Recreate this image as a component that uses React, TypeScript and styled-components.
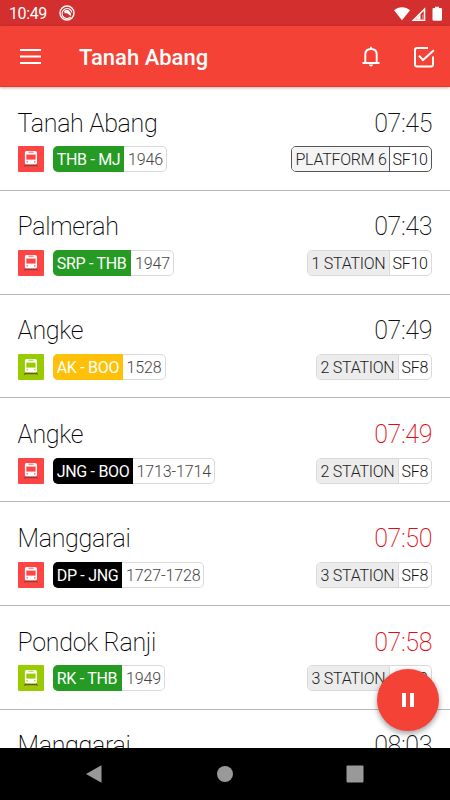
import React from "react";
import styled, { createGlobalStyle } from "styled-components";

const GlobalStyle = createGlobalStyle`
  * { box-sizing: border-box; }
  body { margin: 0; background: #fff; font-family: Roboto, "Liberation Sans", sans-serif; }
`;

const Screen = styled.div`
  position: relative;
  width: 450px;
  height: 800px;
  display: flex;
  flex-direction: column;
  overflow: hidden;
  background: #fff;
`;

const StatusBar = styled.div`
  height: 26px;
  flex: none;
  display: flex;
  align-items: center;
  padding: 1px 7px 0 9px;
  background: #d32f2f;
  color: #fff;
  font-size: 16px;
  line-height: 25px;
  svg { display: block; }
`;

const Clock = styled.span`
  width: 50px;
  letter-spacing: -0.4px;
`;

const StatusIcons = styled.div`
  margin-left: auto;
  display: flex;
`;

const AppBar = styled.header`
  position: relative;
  height: 61px;
  flex: none;
  display: flex;
  align-items: center;
  padding: 0 15px 0 20px;
  background: #f44336;
  border-bottom: 1px solid #f63420;
  box-shadow: 0 1px 3px rgba(0, 0, 0, 0.28);
  color: #fff;
  svg { display: block; }
`;

const Title = styled.h1`
  margin: 4px auto 0 38px;
  font-size: 22px;
  font-weight: 500;
  line-height: 28px;
  white-space: nowrap;
`;

const Actions = styled.div`
  display: flex;
  align-items: center;
  gap: 33px;
  padding-top: 1px;
`;

const List = styled.main`
  flex: 1;
  min-height: 0;
  overflow: hidden;
`;

const Row = styled.section`
  height: 103.8px;
  padding: 20.7px 18px 0 17.5px;
  border-bottom: 1px solid #b8b8b8;
`;

const Line = styled.div`
  display: flex;
  justify-content: space-between;
  height: 32px;
  line-height: 32px;
  font-size: 25px;
  font-weight: 200;
  color: #000;
`;

const Station = styled.span`
  letter-spacing: -0.3px;
`;

const Time = styled.span<{ $late?: boolean }>`
  letter-spacing: -0.4px;
  color: ${(p) => (p.$late ? "#e00b14" : "#111")};
`;

const Tags = styled.div`
  display: flex;
  align-items: center;
  justify-content: space-between;
  margin-top: 6.7px;
`;

const Route = styled.div`
  display: flex;
  align-items: center;
  gap: 9px;
`;

const TrainBox = styled.span<{ $color: string }>`
  width: 26px;
  height: 26px;
  border-radius: 1px;
  background: ${(p) => p.$color};
  svg { display: block; }
`;

const Pill = styled.div<{ $dark?: boolean }>`
  display: flex;
  height: 26px;
  border: 1px solid ${(p) => (p.$dark ? "#555" : "#d9d9d9")};
  border-radius: 5px;
  overflow: hidden;
  font-size: 16px;
  line-height: 26px;
  white-space: nowrap;
`;

const LinePill = styled(Pill)`
  border: 0;
  box-shadow: inset 0 0 0 1px #d9d9d9;
`;

const LineCode = styled.span<{ $w: number; $color: string }>`
  width: ${(p) => p.$w}px;
  height: 26px;
  padding: 1px 0 0 4.2px;
  background: ${(p) => p.$color};
  color: #fff;
  letter-spacing: -0.3px;
`;

const TrainNo = styled.span<{ $w: number }>`
  width: ${(p) => p.$w}px;
  padding: 1px 0 0 3.9px;
  color: #444;
  font-weight: 300;
  letter-spacing: -0.1px;
`;

const Position = styled.span<{ $dark?: boolean; $w: number }>`
  width: ${(p) => p.$w}px;
  padding-left: 3.5px;
  background: ${(p) => (p.$dark ? "#f4f4f4" : "#ececec")};
  border-right: 1px solid ${(p) => (p.$dark ? "#555" : "#d9d9d9")};
  color: #222;
  font-weight: 300;
  letter-spacing: -0.25px;
`;

const Cars = styled.span<{ $w: number }>`
  width: ${(p) => p.$w}px;
  padding-left: 3px;
  color: #111;
  font-weight: 300;
  letter-spacing: -0.3px;
`;

const PauseButton = styled.button`
  position: absolute;
  left: 377px;
  top: 669px;
  width: 62px;
  height: 62px;
  border: 0;
  border-radius: 50%;
  padding: 0;
  display: flex;
  align-items: center;
  justify-content: center;
  background: #f44336;
  box-shadow: 0 3px 5px rgba(0, 0, 0, 0.28), 0 1px 8px rgba(0, 0, 0, 0.12);
`;

const NavBar = styled.nav`
  height: 52px;
  flex: none;
  background: #000;
  display: flex;
  align-items: center;
  justify-content: space-between;
  padding: 0 86px 0 86px;
  svg { display: block; }
`;

const TrainIcon = ({ color }: { color: string }) => (
  <svg width="26" height="26" viewBox="0 0 26 26">
    <path d="M8 18.8 6.2 20.6M18 18.8l1.6 1.8M7 19.6h12" stroke="#7a4a4a" strokeWidth="1.1" fill="none" />
    <path d="M8.5 5h8.2c1.600 0 2.300.9 2.300 2.300v9.400c0 1-.7 1.600-1.700 1.600H8.600c-1 0-1.700-.6-1.700-1.600V7.300C6.900 5.900 7.300 5 8.500 5z" fill="#fff" />
    <path d="M10.5 6.200h5" stroke={color} strokeWidth=".9" />
    <path d="M8.300 8.600h9.300v5H8.300z" fill={color} />
    <path d="M8.500 15.800h1.500M16 15.800h1.500" stroke={color} strokeWidth="1" />
  </svg>
);

const RED = "#ff4444";
const LIME = "#99cc00";
const GREEN = "#259b24";

type Train = {
  name: string; time: string; late?: boolean; icon: string;
  code: string; color: string; codeW: number; no: string; noW: number;
  pos: string; posW: number; cars: string; carsW: number; dark?: boolean;
};

const trains: Train[] = [
  { name: "Tanah Abang", time: "07:45", icon: RED, code: "THB - MJ", color: GREEN, codeW: 71.5, no: "1946", noW: 43, pos: "PLATFORM 6", posW: 97.5, cars: "SF10", carsW: 41.5, dark: true },
  { name: "Palmerah", time: "07:43", icon: RED, code: "SRP - THB", color: GREEN, codeW: 78.5, no: "1947", noW: 43, pos: "1 STATION", posW: 81.5, cars: "SF10", carsW: 41.5 },
  { name: "Angke", time: "07:49", icon: LIME, code: "AK - BOO", color: "#ffc107", codeW: 70, no: "1528", noW: 43, pos: "2 STATION", posW: 81.5, cars: "SF8", carsW: 32.5 },
  { name: "Angke", time: "07:49", late: true, icon: RED, code: "JNG - BOO", color: "#000", codeW: 80, no: "1713-1714", noW: 82, pos: "2 STATION", posW: 81.5, cars: "SF8", carsW: 32.5 },
  { name: "Manggarai", time: "07:50", late: true, icon: RED, code: "DP - JNG", color: "#000", codeW: 69.5, no: "1727-1728", noW: 82, pos: "3 STATION", posW: 81.5, cars: "SF8", carsW: 32.5 },
  { name: "Pondok Ranji", time: "07:58", late: true, icon: LIME, code: "RK - THB", color: GREEN, codeW: 69.5, no: "1949", noW: 42.5, pos: "3 STATION", posW: 81.5, cars: "SF10", carsW: 41.5 },
];

const TrainSummary = ({ name, time, late }: Pick<Train, "name" | "time" | "late">) => (
  <Line>
    <Station>{name}</Station>
    <Time $late={late}>{time}</Time>
  </Line>
);

const TrainRow = ({ t }: { t: Train }) => (
  <Row>
    <TrainSummary name={t.name} time={t.time} late={t.late} />
    <Tags>
      <Route>
        <TrainBox $color={t.icon}><TrainIcon color={t.icon} /></TrainBox>
        <LinePill>
          <LineCode $color={t.color} $w={t.codeW}>{t.code}</LineCode>
          <TrainNo $w={t.noW}>{t.no}</TrainNo>
        </LinePill>
      </Route>
      <Pill $dark={t.dark}>
        <Position $dark={t.dark} $w={t.posW}>{t.pos}</Position>
        <Cars $w={t.carsW}>{t.cars}</Cars>
      </Pill>
    </Tags>
  </Row>
);

export default function App() {
  return (
    <>
      <GlobalStyle />
      <Screen>
        <StatusBar>
          <Clock>10:49</Clock>
          <svg width="17" height="17" viewBox="0 0 17 17" fill="none" stroke="#fff">
            <circle cx="8" cy="8" r="7" strokeWidth="1.4" />
            <path d="M11.6 12A5 5 0 1 1 12.9 7.5" strokeWidth="1.1" />
            <path d="M5 6.5C6 4.6 9 4.5 10.5 6.3L12.3 9 11.5 11 8.2 8.2 5.8 8.3z" fill="#fff" stroke="none" />
          </svg>
          <StatusIcons>
            <svg width="50" height="16" viewBox="0 0 50 16">
              <path d="M1 4.3C5.5.3 12.5.3 17 4.3L9 14.3z" fill="#fff" />
              <path d="M32.3 1.3V15H18.5z M30.8 5 22.3 13.5H30.8z" fill="#fff" fillRule="evenodd" />
              <path d="M22.3 13.5 27.5 8.3V13.5z" fill="#fff" />
              <path d="M29 8.8h1.8v4.700H29z" fill="#e97575" />
              <path d="M42 2V.8h4V2h1.700q1.300 0 1.300 1.300V13.500q0 1.300-1.300 1.300h-7q-1.200 0-1.200-1.300V3.300Q39.500 2 40.700 2z" fill="#fff" />
            </svg>
          </StatusIcons>
        </StatusBar>
        <AppBar>
          <svg width="21" height="16" viewBox="0 0 21 16">
            <path d="M0 2h21M0 8.500h21M0 15h21" stroke="#fff" strokeWidth="2" />
          </svg>
          <Title>Tanah Abang</Title>
          <Actions>
            <svg width="18" height="21" viewBox="0 0 18 21" fill="none" stroke="#fff" strokeWidth="1.900">
              <path d="M.5 17h17M3.3 16.5V8.5C3.3 5 5.5 3 9 3s5.700 2 5.700 5.500V16.500M9 3V.7" />
              <path d="M7 18.600h4q-.3 2-2 2t-2-2z" fill="#fff" stroke="none" />
            </svg>
            <svg width="22" height="22" viewBox="0 0 22 22" fill="none" stroke="#fff" strokeWidth="2">
              <path d="M15 2H4Q2 2 2 4V18.500q0 2 2 2H18q2 0 2-2V10.500" />
              <path d="m6 9.800 4 4.200L20.800 4.300" />
            </svg>
          </Actions>
        </AppBar>
        <List>
          {trains.map((t, i) => <TrainRow key={i} t={t} />)}
          <Row>
            <TrainSummary name="Manggarai" time="08:03" />
          </Row>
        </List>
        <NavBar>
          <svg width="17" height="18" viewBox="0 0 17 18"><path d="M0 9 15.500.2V17.800z" fill="#999" /></svg>
          <svg width="16" height="16" viewBox="0 0 16 16"><circle cx="8" cy="8" r="8" fill="#999" /></svg>
          <svg width="18" height="18" viewBox="0 0 18 18"><rect x=".5" y=".5" width="17" height="17" rx="1" fill="#999" /></svg>
        </NavBar>
        <PauseButton aria-label="Pause">
          <svg width="14" height="14" viewBox="0 0 14 14"><path d="M1 0h4v14H1zM9 0h4v14H9z" fill="#fff" /></svg>
        </PauseButton>
      </Screen>
    </>
  );
}
